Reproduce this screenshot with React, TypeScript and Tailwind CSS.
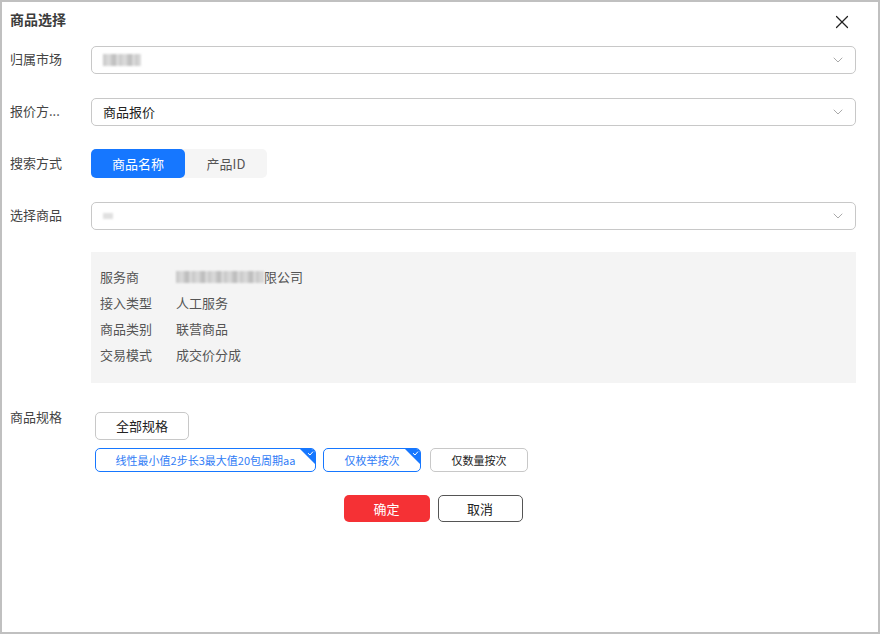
import { ChevronDown, X } from 'lucide-react'

const font = { fontFamily: '"Noto Sans CJK SC", "Noto Sans", sans-serif' }

function Blur({ w }: { w: number }) {
  // 打码的文字
  return (
    <span
      className="inline-block h-[12px] bg-[repeating-linear-gradient(90deg,#b9b9b9_0px,#d6d6d6_6px,#a9a9a9_11px,#e3e3e3_16px)] blur-[1.2px] opacity-80"
      style={{ width: w }}
    />
  )
}

function Select({ children }: { children?: React.ReactNode }) {
  return (
    <div className="flex h-[28px] flex-1 items-center justify-between rounded-[5px] border border-[#c8c8c8] bg-white pl-[11px] pr-[9px] text-[13px] text-[#222]">
      <div className="flex items-center">{children}</div>
      <ChevronDown className="h-[16px] w-[16px] text-[#8a8a8a]" strokeWidth={1.1} />
    </div>
  )
}

function Tag({ label, active }: { label: string; active?: boolean }) {
  return (
    <div
      className={`relative flex h-[24px] items-center justify-center overflow-hidden rounded-[5px] border text-[11px] ${active ? 'border-[#1677ff] text-[#2f7cf6]' : 'border-[#c8c8c8] text-[#222]'}`}
    >
      {label}
      {active && (
        <svg className="absolute right-0 top-0" width="15" height="15" viewBox="0 0 15 15">
          <path d="M0 0H15V15Z" fill="#1677ff" />
          <path d="M8 4.2L10 6L13 2.6" stroke="#fff" strokeWidth="1" fill="none" />
        </svg>
      )}
    </div>
  )
}

export default function App() {
  const info = [
    ['服务商', null],
    ['接入类型', '人工服务'],
    ['商品类别', '联营商品'],
    ['交易模式', '成交价分成'],
  ]

  return (
    <div className="relative h-[634px] w-[880px] border-2 border-[#c0c0c0] bg-white pl-[8px] pr-[22px]" style={font}>
      {/* 标题 */}
      <div className="pt-[7px] text-[14px] font-bold leading-[20px] text-[#3c3c3c]">商品选择</div>
      <button className="absolute right-[25px] top-[9px] text-[#222]">
        <X className="h-[22px] w-[22px]" strokeWidth={1.3} />
      </button>

      <div className="mt-[17px] flex items-center">
        <div className="w-[81px] -translate-y-[1px] text-[13px] text-[#444]">归属市场</div>
        <Select>
          <Blur w={38} />
        </Select>
      </div>

      <div className="mt-[24px] flex items-center">
        <div className="w-[81px] -translate-y-[1px] text-[13px] text-[#444]">报价方...</div>
        <Select>商品报价</Select>
      </div>

      <div className="mt-[23px] flex items-center">
        <div className="w-[81px] -translate-y-[1px] text-[13px] text-[#444]">搜索方式</div>
        <div className="flex h-[29px] rounded-[5px] bg-[#f5f5f5] text-[13px]">
          <div className="flex w-[94px] items-center justify-center rounded-[5px] bg-[#1677ff] text-white">商品名称</div>
          <div className="flex w-[82px] items-center justify-center text-[#555]">产品ID</div>
        </div>
      </div>

      <div className="mt-[24px] flex items-center">
        <div className="w-[81px] -translate-y-[1px] text-[13px] text-[#444]">选择商品</div>
        <Select>
          <span className="inline-block h-[6px] w-[10px] bg-[#e0e0e0] blur-[1px]" />
        </Select>
      </div>

      <div className="mt-[22px] flex">
        <div className="w-[81px]" />
        <div className="flex-1 bg-[#f4f4f4] pb-[15px] pl-[9px] pt-[12px] text-[13px] text-[#555]">
          {info.map(([k, v]) => (
            <div key={k} className="flex h-[26px] items-center">
              <div className="w-[76px]">{k}</div>
              {v ? (
                <div>{v}</div>
              ) : (
                <div className="flex items-center">
                  <Blur w={88} />
                  <span>限公司</span>
                </div>
              )}
            </div>
          ))}
        </div>
      </div>

      <div className="mt-[29px] flex items-start">
        <div className="w-[81px] text-[13px] leading-[10px] text-[#444]">商品规格</div>
        <div className="pl-[4px]">
          <button className="flex h-[28px] w-[94px] items-center justify-center rounded-[5px] border border-[#c8c8c8] text-[13px] text-[#222]">
            全部规格
          </button>
          <div className="mt-[8px] flex gap-[7px]">
            <div className="w-[221px]"><Tag label="线性最小值2步长3最大值20包周期aa" active /></div>
            <div className="w-[98px]"><Tag label="仅枚举按次" active /></div>
            <div className="ml-[2px] w-[98px]"><Tag label="仅数量按次" /></div>
          </div>
        </div>
      </div>

      <div className="mt-[23px] flex justify-center gap-[8px] text-[13px]">
        <button className="h-[27px] w-[86px] rounded-[5px] bg-[#f53135] text-white">确定</button>
        <button className="h-[27px] w-[85px] rounded-[5px] border border-[#555] text-[#222]">取消</button>
      </div>
    </div>
  )
}
